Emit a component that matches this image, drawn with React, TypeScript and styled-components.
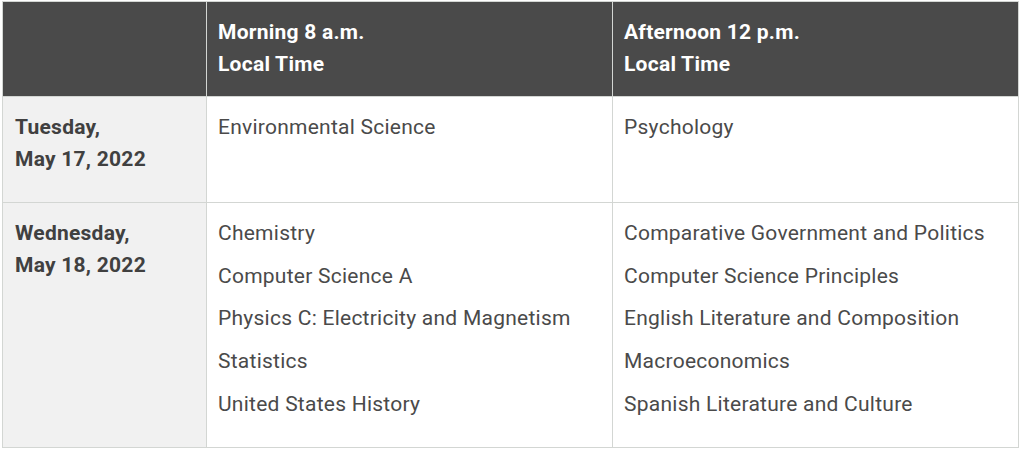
import React from "react";
import styled, { createGlobalStyle } from "styled-components";

const Global = createGlobalStyle`
  html, body { margin: 0; padding: 0; background: #ffffff; }
  body { font-family: Roboto, "Noto Sans", Arial, sans-serif; }
`;

const Page = styled.div`
  padding: 1px 2px 0 2px;
`;

const Table = styled.table`
  width: 1017px;
  border-collapse: collapse;
  table-layout: fixed;
  font-size: 21px;
  letter-spacing: 0.25px;
  line-height: 32px;
`;

const HeadCell = styled.th`
  background: #4a4a4a;
  color: #ffffff;
  font-weight: 700;
  text-align: left;
  vertical-align: top;
  padding: 14px 10px 16px 11px;
  border: 1px solid #d3d6d3;
`;

const DateCell = styled.th`
  background: #f1f1f1;
  color: #404040;
  font-weight: 700;
  text-align: left;
  vertical-align: top;
  padding: 14px 10px 16px 12px;
  border: 1px solid #d3d6d3;
`;

const Cell = styled.td`
  background: #ffffff;
  color: #4a4a4a;
  vertical-align: top;
  padding: 14px 10px 16px 11px;
  border: 1px solid #d3d6d3;
`;

const Item = styled.p`
  margin: 0 0 10.75px 0;
`;

const rows = [
  {
    date: ["Tuesday,", "May 17, 2022"],
    morning: ["Environmental Science"],
    afternoon: ["Psychology"],
  },
  {
    date: ["Wednesday,", "May 18, 2022"],
    morning: [
      "Chemistry",
      "Computer Science A",
      "Physics C: Electricity and Magnetism",
      "Statistics",
      "United States History",
    ],
    afternoon: [
      "Comparative Government and Politics",
      "Computer Science Principles",
      "English Literature and Composition",
      "Macroeconomics",
      "Spanish Literature and Culture",
    ],
  },
];

export default function App() {
  return (
    <Page>
      <Global />
      <Table>
        <colgroup>
          <col style={{ width: 204 }} />
          <col style={{ width: 406 }} />
          <col style={{ width: 406 }} />
        </colgroup>
        <thead>
          <tr>
            <HeadCell />
            <HeadCell>
              Morning 8 a.m.
              <br />
              Local Time
            </HeadCell>
            <HeadCell>
              Afternoon 12 p.m.
              <br />
              Local Time
            </HeadCell>
          </tr>
        </thead>
        <tbody>
          {rows.map((r) => (
            <tr key={r.date[0]}>
              <DateCell>
                <Item>
                  {r.date[0]}
                  <br />
                  {r.date[1]}
                </Item>
              </DateCell>
              <Cell>
                {r.morning.map((m) => (
                  <Item key={m}>{m}</Item>
                ))}
              </Cell>
              <Cell>
                {r.afternoon.map((m) => (
                  <Item key={m}>{m}</Item>
                ))}
              </Cell>
            </tr>
          ))}
        </tbody>
      </Table>
    </Page>
  );
}
